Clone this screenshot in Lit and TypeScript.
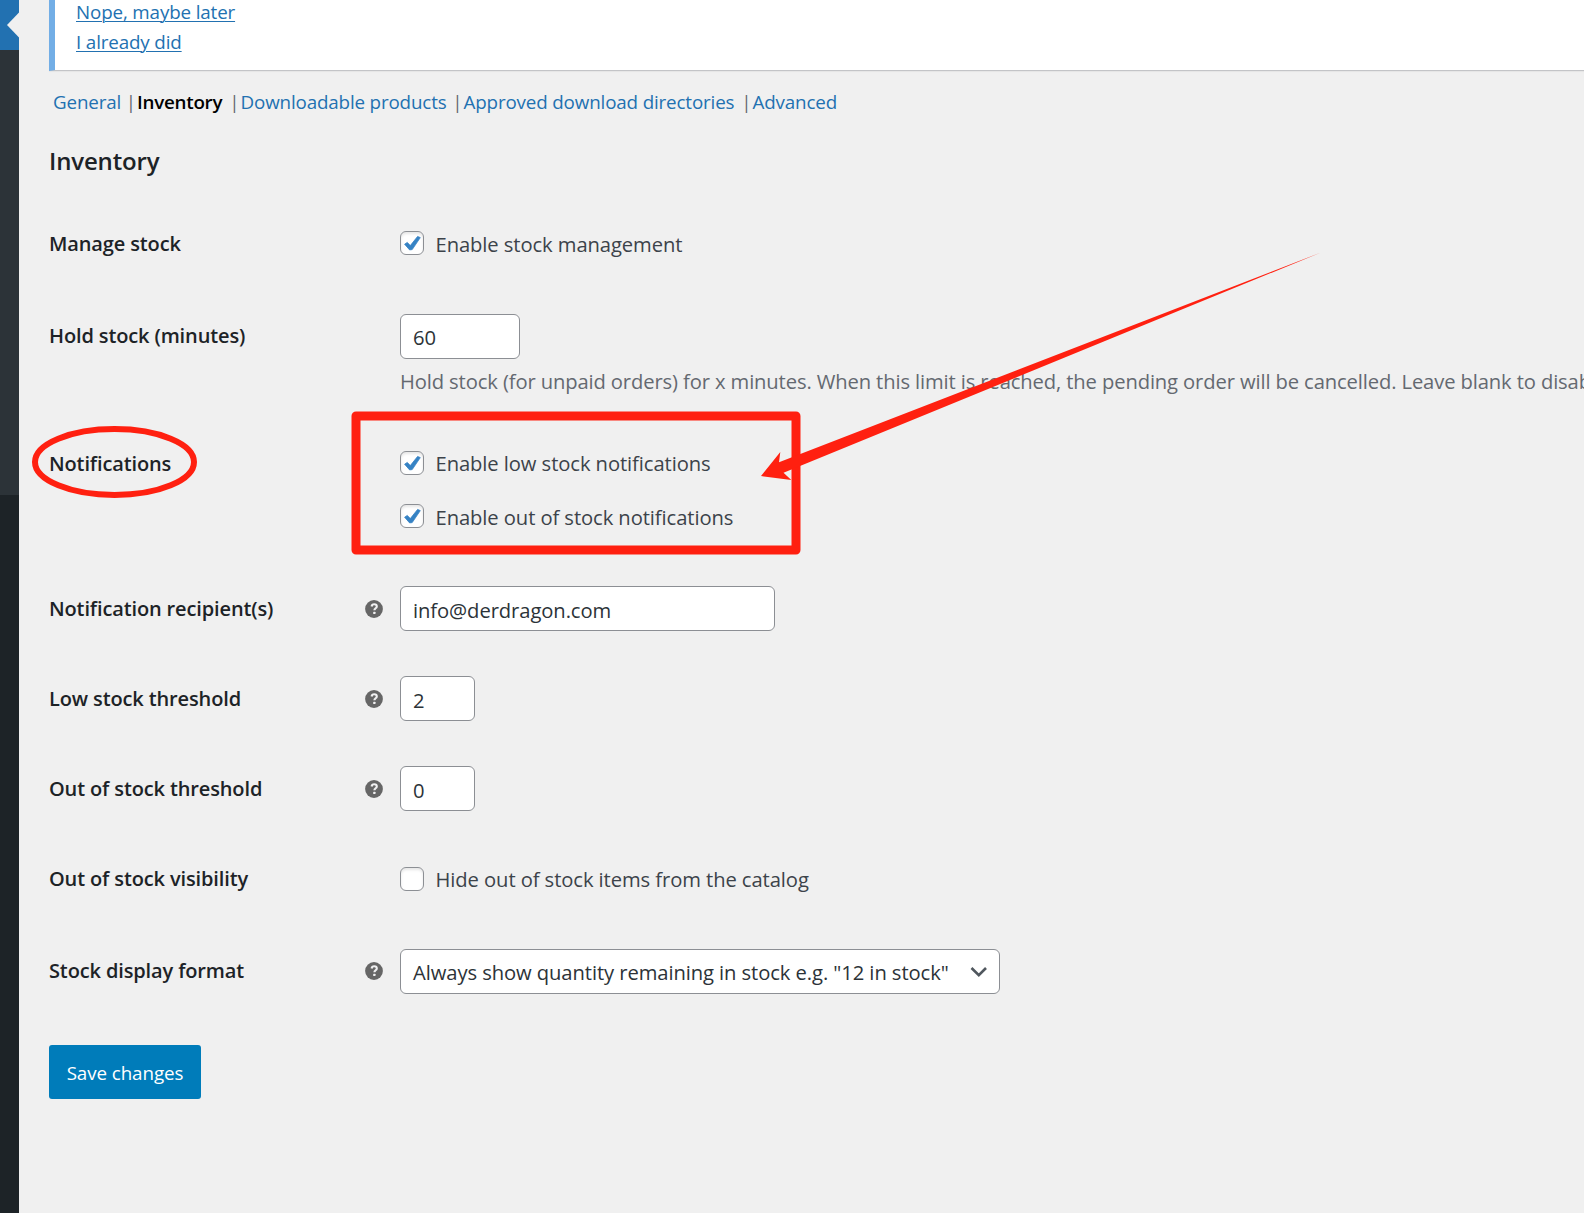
import { LitElement, html, css, nothing, TemplateResult } from "lit";
import { customElement } from "lit/decorators.js";

interface Section {
  label: string;
  size: string;
  current?: boolean;
}

const SECTIONS: Section[] = [
  { label: "General", size: "w-general" },
  { label: "Inventory", size: "w-inventory", current: true },
  { label: "Downloadable products", size: "w-downloads" },
  { label: "Approved download directories", size: "w-directories" },
  { label: "Advanced", size: "w-advanced" },
];

@customElement("help-tip")
export class HelpTip extends LitElement {
  static styles = css`
    :host {
      display: block;
      width: 18px;
      height: 18px;
    }
    .icon {
      display: block;
    }
  `;

  render() {
    return html`<svg class="icon" width="18" height="18" viewBox="0 0 18 18" aria-label="Help">
      <circle cx="9" cy="9" r="8.9" fill="#666" />
      <path
        d="M6.6 6.5C6.8 5 7.8 4.3 9.2 4.3c1.6 0 2.6.8 2.6 2.1 0 1.9-2.4 1.9-2.4 3.9"
        fill="none"
        stroke="#f0f0f1"
        stroke-width="2.1"
      />
      <rect x="8.2" y="11.7" width="2.3" height="2.3" rx="0.6" fill="#f0f0f1" />
    </svg>`;
  }
}

@customElement("check-option")
export class CheckOption extends LitElement {
  static properties = {
    label: { type: String },
    checked: { type: Boolean },
  };

  declare label: string;
  declare checked: boolean;

  static styles = css`
    :host {
      display: flex;
      align-items: center;
      height: 24px;
      gap: 11.5px;
    }
    .box {
      box-sizing: border-box;
      flex: none;
      width: 24px;
      height: 24px;
      border: 1px solid #8c8f94;
      border-radius: 6px;
      background: #fff;
      box-shadow: inset 0 2px 3px rgba(0, 0, 0, 0.1);
    }
    .mark {
      display: block;
    }
    .text {
      color: #3c434a;
      line-height: 24px;
      padding-top: var(--text-drop, 2px);
      white-space: nowrap;
    }
  `;

  render() {
    return html`
      <span class="box">
        ${this.checked
          ? html`<svg class="mark" width="22" height="22" viewBox="0 0 22 22">
              <path
                d="M3.6 12.2 6.3 10.4 9.3 13.6 16.6 4.4 19.3 5.6 11.2 17.6 8.6 17.9Z"
                fill="#3582c4"
                stroke="#3582c4"
                stroke-width="0.8"
                stroke-linejoin="round"
              />
            </svg>`
          : nothing}
      </span>
      <span class="text">${this.label}</span>
    `;
  }
}

@customElement("app-root")
export class AppRoot extends LitElement {
  static styles = css`
    :host {
      display: block;
      font-family: "Open Sans", "Noto Sans", sans-serif;
      font-size: 20.2px;
      letter-spacing: -0.08px;
      color: #3c434a;
    }
    .page {
      position: relative;
      display: flex;
      width: 100%;
      height: 1213px;
      overflow: hidden;
      background: #f0f0f0;
    }
    .sidebar {
      flex: none;
      display: flex;
      flex-direction: column;
      width: 19px;
      background: #1d2327;
    }
    .menu-current {
      display: flex;
      align-items: center;
      justify-content: flex-end;
      height: 50px;
      background: #2271b1;
    }
    .submenu {
      height: 445px;
      background: #2c3338;
    }
    .content {
      flex: 1;
      min-width: 0;
      padding-left: 30px;
    }
    .notice {
      box-sizing: border-box;
      height: 71px;
      border-left: 6px solid #72aee6;
      border-bottom: 1px solid #c3c4c7;
      background: #fff;
      box-shadow: 0 1px 1px rgba(0, 0, 0, 0.04);
      padding-left: 21px;
      font-size: 18.8px;
      letter-spacing: -0.14px;
      line-height: 30px;
      overflow: hidden;
    }
    .notice-link {
      display: block;
      width: max-content;
      height: 30px;
      margin-top: -3px;
      color: #2271b1;
      text-decoration: underline;
      text-decoration-thickness: 1px;
      text-underline-offset: 2px;
    }
    .notice-link + .notice-link {
      margin-top: 0;
    }
    .sections {
      display: flex;
      margin: 0;
      padding: 16px 0 0 4px;
      list-style: none;
      font-size: 18.8px;
      letter-spacing: -0.15px;
      line-height: 30px;
      height: 30px;
    }
    .section {
      box-sizing: border-box;
      flex: none;
      display: flex;
      justify-content: space-between;
      padding-right: 1px;
      color: #646970;
      white-space: nowrap;
    }
    .w-general { width: 84px; }
    .w-inventory { width: 103.5px; }
    .w-downloads { width: 223px; }
    .w-directories { width: 289px; }
    .w-advanced { width: 90px; }
    .section-link {
      color: #2271b1;
      text-decoration: none;
    }
    .current {
      color: #000;
      font-weight: 600;
      letter-spacing: -0.25px;
    }
    .title {
      margin: 0;
      padding-top: 27px;
      height: 55px;
      line-height: 34px;
      font-size: 24px;
      font-weight: 600;
      letter-spacing: -0.15px;
      color: #1d2327;
    }
    .row {
      display: flex;
      align-items: flex-start;
      height: 90px;
    }
    .row.manage { height: 93px; }
    .row.hold { height: 127px; }
    .row.notify { height: 145px; }
    .row.visibility { height: 93px; }
    .row.format { height: 118px; }
    .label {
      flex: none;
      width: 315px;
      padding-top: 33px;
      line-height: 24px;
      font-size: 20px;
      font-weight: 600;
      letter-spacing: -0.13px;
      color: #1d2327;
      white-space: nowrap;
    }
    .hold .label,
    .format .label {
      padding-top: 32px;
    }
    .tip {
      flex: none;
      box-sizing: border-box;
      width: 36px;
      padding: 36.3px 0 0 0.5px;
    }
    .format .tip {
      padding-top: 35.3px;
    }
    .control {
      flex: none;
      display: flex;
      flex-direction: column;
      padding-top: 22px;
    }
    .control.checks {
      padding-top: 32px;
      gap: 29px;
    }
    .visibility .control.checks {
      padding-top: 33px;
    }
    .visibility check-option,
    .notify check-option:first-child {
      --text-drop: 0px;
    }
    .field {
      box-sizing: border-box;
      display: flex;
      align-items: center;
      justify-content: space-between;
      height: 45px;
      border: 1px solid #8c8f94;
      border-radius: 6px;
      background: #fff;
      color: #2c3338;
      padding: 3px 12px 0;
      line-height: 30px;
      white-space: nowrap;
    }
    .hold .field,
    .format .field {
      padding-top: 1px;
    }
    .minutes { width: 120px; }
    .email { width: 375px; }
    .number { width: 75px; }
    .select { width: 600px; }
    .chevron {
      flex: none;
      margin-top: -1px;
    }
    .description {
      margin: 0;
      padding-top: 10px;
      line-height: 24px;
      letter-spacing: -0.12px;
      color: #646970;
      white-space: nowrap;
    }
    .save {
      display: block;
      box-sizing: border-box;
      width: 152px;
      height: 54px;
      padding: 2px 0 0;
      border: 0;
      border-radius: 3px;
      background: #007cba;
      color: #fff;
      font: inherit;
      font-size: 18.8px;
      letter-spacing: -0.08px;
      text-align: center;
    }
    .markup {
      position: absolute;
      left: 0;
      top: 0;
      pointer-events: none;
    }
  `;

  private row(
    kind: string,
    label: string,
    control: TemplateResult,
    tip = false,
    checks = false,
  ) {
    return html`<div class="row ${kind}">
      <div class="label">${label}</div>
      <div class="tip">${tip ? html`<help-tip></help-tip>` : nothing}</div>
      <div class="control ${checks ? "checks" : ""}">${control}</div>
    </div>`;
  }

  render() {
    return html`
      <div class="page">
        <div class="sidebar">
          <div class="menu-current">
            <svg width="12" height="26" viewBox="0 0 12 26">
              <path d="M12 0.5V25.5L0 13Z" fill="#f0f0f0" />
            </svg>
          </div>
          <div class="submenu"></div>
        </div>
        <div class="content">
          <div class="notice">
            <a class="notice-link">Nope, maybe later</a>
            <a class="notice-link">I already did</a>
          </div>
          <ul class="sections">
            ${SECTIONS.map(
              (s, i) => html`<li class="section ${s.size}">
                <a class="section-link ${s.current ? "current" : ""}">${s.label}</a>
                ${i < SECTIONS.length - 1 ? html`<span>|</span>` : nothing}
              </li>`,
            )}
          </ul>
          <h2 class="title">Inventory</h2>
          ${this.row(
            "manage",
            "Manage stock",
            html`<check-option label="Enable stock management" checked></check-option>`,
            false,
            true,
          )}
          ${this.row(
            "hold",
            "Hold stock (minutes)",
            html`<div class="field minutes">60</div>
              <p class="description">
                Hold stock (for unpaid orders) for x minutes. When this limit is reached, the
                pending order will be cancelled. Leave blank to disable.
              </p>`,
          )}
          ${this.row(
            "notify",
            "Notifications",
            html`<check-option label="Enable low stock notifications" checked></check-option>
              <check-option label="Enable out of stock notifications" checked></check-option>`,
            false,
            true,
          )}
          ${this.row(
            "",
            "Notification recipient(s)",
            html`<div class="field email">info@derdragon.com</div>`,
            true,
          )}
          ${this.row("", "Low stock threshold", html`<div class="field number">2</div>`, true)}
          ${this.row("", "Out of stock threshold", html`<div class="field number">0</div>`, true)}
          ${this.row(
            "visibility",
            "Out of stock visibility",
            html`<check-option label="Hide out of stock items from the catalog"></check-option>`,
            false,
            true,
          )}
          ${this.row(
            "format",
            "Stock display format",
            html`<div class="field select">
              <span>Always show quantity remaining in stock e.g. "12 in stock"</span>
              <svg class="chevron" width="17" height="12" viewBox="0 0 17 12">
                <path
                  d="M1.5 2 8.8 9.2 16 2"
                  fill="none"
                  stroke="#50575e"
                  stroke-width="2.6"
                />
              </svg>
            </div>`,
            true,
          )}
          <button class="save">Save changes</button>
        </div>
        <svg class="markup" width="1584" height="1213" viewBox="0 0 1584 1213">
          <ellipse cx="114.5" cy="462" rx="79.5" ry="33" fill="none" stroke="#ff2010" stroke-width="6" />
          <rect
            x="356"
            y="416"
            width="440"
            height="134"
            fill="none"
            stroke="#ff2010"
            stroke-width="9"
            stroke-linejoin="round"
          />
          <path
            d="M761 476 780.3 452 779 462.3 1321 252.5 783.5 472.8 791.3 480Z"
            fill="#ff2010"
          />
        </svg>
      </div>
    `;
  }
}
